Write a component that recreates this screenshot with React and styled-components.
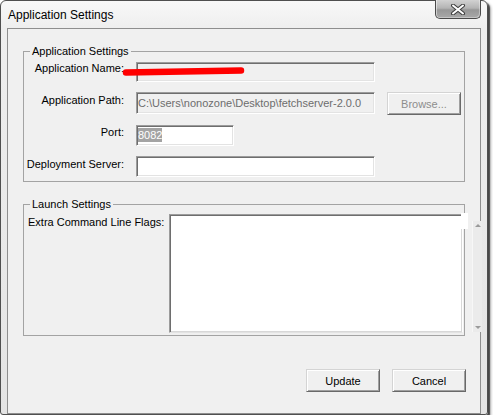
import React from "react";
import styled, { createGlobalStyle } from "styled-components";

const GlobalStyle = createGlobalStyle`
  html, body {
    margin: 0;
    padding: 0;
    background: #ffffff;
  }
  body {
    font-family: "Liberation Sans", Arial, sans-serif;
    font-size: 11px;
    color: #000000;
  }
`;

const Window = styled.div`
  position: relative;
  width: 486px;
  height: 413px;
  border: 1px solid #4f4f4f;
  border-radius: 6px 6px 3px 3px;
  background: linear-gradient(to bottom, #f8f8f8 0, #eeeeee 28px, #e4e4e4 100%);
  box-shadow: 2px 2px 1px rgba(0, 0, 0, 0.6), 3px 3px 3px rgba(0, 0, 0, 0.3);
  display: flex;
  flex-direction: column;
`;

const TitleBar = styled.div`
  height: 28px;
  display: flex;
  justify-content: space-between;
  align-items: flex-start;
`;

const Title = styled.div`
  padding: 6px 0 0 7px;
  font-size: 12px;
  line-height: 16px;
  color: #000000;
`;

const CloseButton = styled.div`
  width: 44px;
  height: 18px;
  margin: -1px 6px 0 0;
  border: 1px solid #4a4a4a;
  border-top: none;
  border-radius: 0 0 5px 5px;
  background: linear-gradient(to bottom, #d2d2d2 0, #b4b4b4 45%, #979797 55%, #a8a8a8 100%);
  box-shadow: inset 1px 0 0 rgba(255, 255, 255, 0.5), inset -1px -1px 0 rgba(255, 255, 255, 0.35);
  display: flex;
  align-items: center;
  justify-content: center;
`;

const Client = styled.div`
  position: relative;
  margin: 0 6px;
  height: 377px;
  border: 1px solid #8e8e8e;
  background: #f0f0f0;
  padding: 15px 14px 0 15px;
  box-sizing: content-box;
  display: flex;
  flex-direction: column;
`;

const Group = styled.fieldset`
  box-sizing: border-box;
  width: 442px;
  margin: ${({ $top }) => $top || 0}px 0 0 0;
  padding: ${({ $pad }) => $pad};
  border: 1px solid #a3a3a3;
  min-width: 0;
`;

const Legend = styled.legend`
  margin-left: ${({ $indent }) => $indent}px;
  padding: 0 2px;
  font-size: 11px;
  line-height: 14px;
  color: #000000;
`;

const FormGrid = styled.div`
  display: grid;
  grid-template-columns: 100px 239px 75px;
  grid-template-rows: 30px 33px 31px 21px;
  column-gap: 12px;
  align-items: start;
`;

const Label = styled.div`
  text-align: right;
  line-height: 14px;
  margin-top: ${({ $shift }) => $shift || 0}px;
  white-space: nowrap;
  color: #000000;
`;

const Field = styled.div`
  box-sizing: border-box;
  width: ${({ $w }) => $w || 239}px;
  height: ${({ $h }) => $h || 20}px;
  border: 1px solid;
  border-color: #9c9c9c #ffffff #ffffff #9c9c9c;
  box-shadow: inset 1px 1px 0 #6e6e6e, inset -1px -1px 0 #e3e3e3;
  background: ${({ $disabled }) => ($disabled ? "#f0f0f0" : "#ffffff")};
  color: ${({ $disabled }) => ($disabled ? "#6d6d6d" : "#000000")};
  padding: 0 0 0 1px;
  line-height: ${({ $h }) => ($h || 20) - 2}px;
  white-space: nowrap;
  overflow: hidden;
`;

const Selected = styled.span`
  background: #a3a3a3;
  color: #ffffff;
  padding: 1px 0;
`;

const PushButton = styled.div`
  box-sizing: border-box;
  width: 74px;
  height: 23px;
  border: 1px solid;
  border-color: #d4d4d4 #696969 #696969 #d4d4d4;
  box-shadow: inset 1px 1px 0 #ffffff, inset -1px -1px 0 #a0a0a0;
  background: #f0f0f0;
  color: ${({ $disabled }) => ($disabled ? "#8d8d8d" : "#000000")};
  display: flex;
  align-items: center;
  justify-content: center;
  font-size: 11px;
`;

const LaunchRow = styled.div`
  display: flex;
  align-items: flex-start;
`;

const LaunchLabel = styled.div`
  width: 141px;
  line-height: 14px;
  margin-top: 1px;
  white-space: nowrap;
`;

const AreaWrap = styled.div`
  position: relative;
`;

const TextArea = styled.div`
  box-sizing: border-box;
  width: 294px;
  height: 119px;
  border: 1px solid;
  border-color: #9c9c9c #ffffff #e3e3e3 #9c9c9c;
  box-shadow: inset 1px 1px 0 #6e6e6e, inset -1px -1px 0 #d8d8d8;
  background: #ffffff;
`;

const AreaNotch = styled.div`
  position: absolute;
  left: 292px;
  top: -1px;
  width: 7px;
  height: 16px;
  background: #ffffff;
`;

const GhostScroll = styled.div`
  position: absolute;
  left: 303px;
  top: 7px;
  width: 10px;
  height: 111px;
  background: #ebebeb;
  border-left: 1px solid #f7f7f7;
  display: flex;
  flex-direction: column;
  justify-content: space-between;
  align-items: center;
  padding: 3px 0;
  box-sizing: border-box;
`;

const Arrow = styled.div`
  width: 0;
  height: 0;
  border-left: 3px solid transparent;
  border-right: 3px solid transparent;
  ${({ $down }) =>
    $down ? "border-top: 3px solid #9a9a9a;" : "border-bottom: 3px solid #9a9a9a;"}
`;

const ButtonBar = styled.div`
  display: flex;
  justify-content: flex-end;
  gap: 12px;
  margin-top: 33px;
`;

const RedMark = styled.svg`
  position: absolute;
  left: 112px;
  top: 36px;
  pointer-events: none;
`;

export default function App() {
  return (
    <>
      <GlobalStyle />
      <Window>
        <TitleBar>
          <Title>Application Settings</Title>
          <CloseButton>
            <svg width="16" height="11" viewBox="0 0 16 11">
              <path d="M3 1.5 L13 9.5 M13 1.5 L3 9.5" stroke="#3e3e3e" strokeWidth="4" strokeLinecap="round" />
              <path d="M3 1.5 L13 9.5 M13 1.5 L3 9.5" stroke="#ffffff" strokeWidth="2" strokeLinecap="round" />
            </svg>
          </CloseButton>
        </TitleBar>
        <Client>
          <Group $pad="4px 0 4px 0">
            <Legend $indent={6}>Application Settings</Legend>
            <FormGrid>
              <Label $shift={-1}>Application Name:</Label>
              <Field $disabled />
              <span />

              <Label $shift={1}>Application Path:</Label>
              <Field $disabled $h={22}>C:\Users\nonozone\Desktop\fetchserver-2.0.0</Field>
              <PushButton $disabled>Browse...</PushButton>

              <Label>Port:</Label>
              <Field $w={98} $h={21}>
                <Selected>8082</Selected>
              </Field>
              <span />

              <Label $shift={1}>Deployment Server:</Label>
              <Field $h={21} />
              <span />
            </FormGrid>
          </Group>

          <Group $top={15} $pad="3px 0 2px 4px">
            <Legend $indent={2}>Launch Settings</Legend>
            <LaunchRow>
              <LaunchLabel>Extra Command Line Flags:</LaunchLabel>
              <AreaWrap>
                <TextArea />
                <AreaNotch />
                <GhostScroll>
                  <Arrow />
                  <Arrow $down />
                </GhostScroll>
              </AreaWrap>
            </LaunchRow>
          </Group>

          <ButtonBar>
            <PushButton>Update</PushButton>
            <PushButton>Cancel</PushButton>
          </ButtonBar>

          <RedMark width="130" height="12" viewBox="0 0 130 12">
            <path d="M6 7.5 Q 60 6.5 121 5.5" stroke="#ff0000" strokeWidth="6.5" strokeLinecap="round" fill="none" />
          </RedMark>
        </Client>
      </Window>
    </>
  );
}
